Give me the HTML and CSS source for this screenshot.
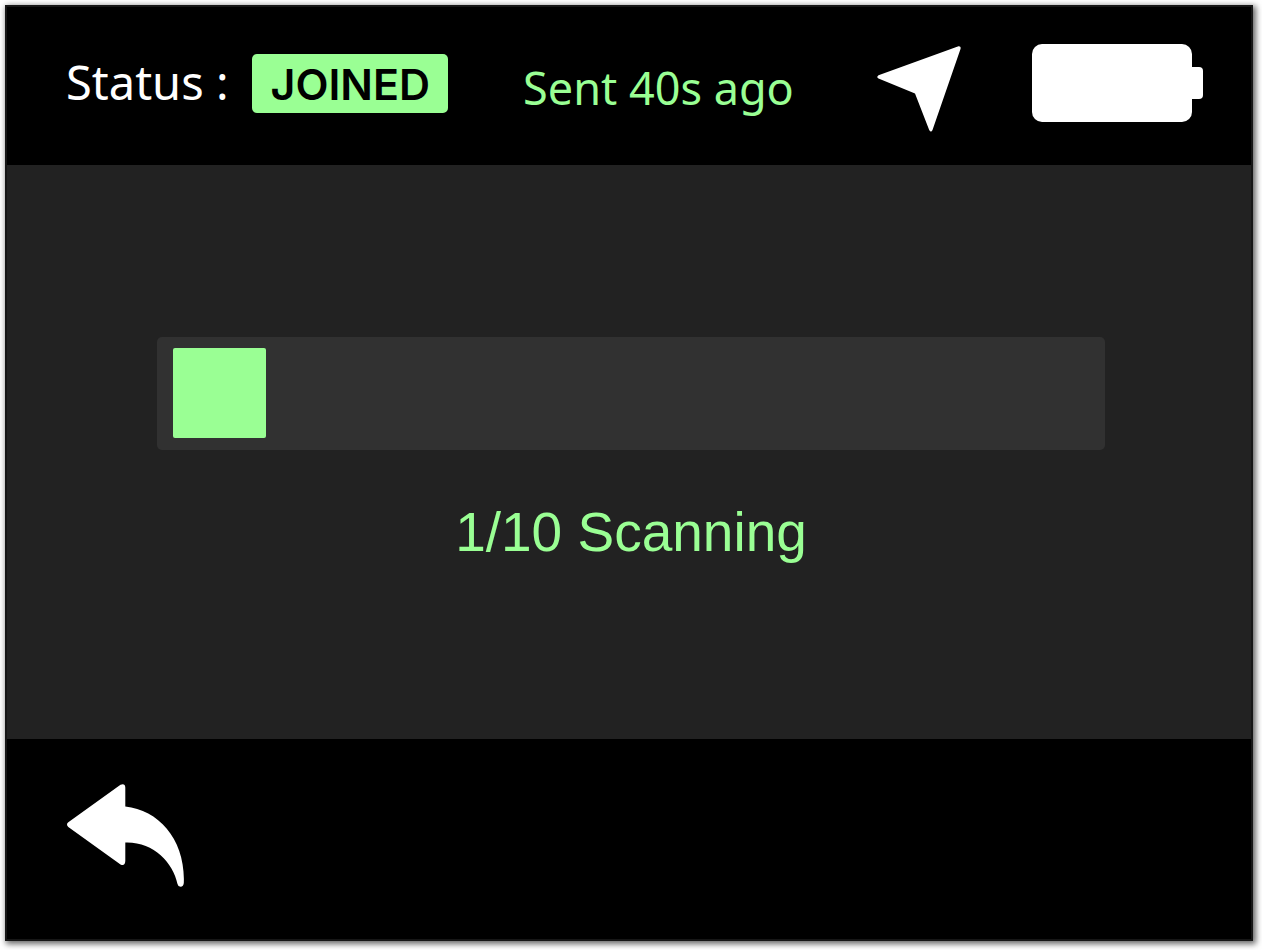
FILE: index.html
```html
<!DOCTYPE html>
<html lang="en">
<head>
<meta charset="utf-8">
<meta name="viewport" content="width=device-width, initial-scale=1">
<title>Scanning</title>
<link rel="stylesheet" href="styles.css">
</head>
<body>
<div class="screen">
  <header class="topbar">
    <span class="status-label">Status :</span>
    <span class="badge">JOINED</span>
    <span class="sent">Sent 40s ago</span>
    <div class="indicators">
      <svg class="location" viewBox="0 0 84 86" role="img" aria-label="Location">
        <path d="M1.500 29.200 81.500.3Q84.300 0 83.500 3L55.500 84Q54 87 52.200 84L38 47.500 1.500 32.500Q-1 31 1.500 29.200Z"/>
      </svg>
      <svg class="battery" viewBox="0 0 171 78" role="img" aria-label="Battery full">
        <rect width="160" height="78" rx="10"/>
        <path d="M158 23h9q4 0 4 4v24q0 4-4 4h-9z"/>
      </svg>
    </div>
  </header>
  <main class="content">
    <div class="progress" role="progressbar" aria-labelledby="progress-text" aria-valuemin="0" aria-valuemax="10" aria-valuenow="1">
      <div class="progress-fill" style="width: 10%"></div>
    </div>
    <p class="progress-text" id="progress-text">1/10 Scanning</p>
  </main>
  <footer class="bottombar">
    <button class="back" type="button" aria-label="Back">
      <svg class="back-icon" viewBox="0 0 118 103" aria-hidden="true">
        <path d="M1.300 38.300 53.500.8Q58-1 58.300 3.500V22.500C92 26 118.500 56 116.800 99Q116.500 102.700 113.500 102.700 111 102.700 110.500 100C106 78 86 57.500 58.300 58.500V77Q58 82.500 53.500 80.500L1.300 43Q-1.300 40.500 1.300 38.300Z"/>
      </svg>
    </button>
  </footer>
</div>
</body>
</html>
```
FILE: styles.css
```css
* {
  box-sizing: border-box;
}

body {
  margin: 0;
  padding: 5px 9px 9px 5px;
  background: #fff;
  font-family: "Noto Sans", sans-serif;
}

.screen {
  display: flex;
  flex-direction: column;
  min-height: calc(100vh - 14px);
  border: 2px solid #161616;
  background: #222;
  box-shadow: 2px 2px 6px 1px rgba(0, 0, 0, 0.6);
}

.topbar {
  display: flex;
  align-items: flex-start;
  min-height: 158px;
  padding: 37px 48px 32px 59px;
  background: #000;
  color: #fff;
  white-space: nowrap;
}

.status-label {
  padding-top: 12px;
  font-size: 47px;
  line-height: 52px;
}

.badge {
  margin: 10px 0 0 24px;
  padding: 1px 18px 0;
  border-radius: 5px;
  background: #9aff94;
  color: #000;
  font-family: Inter, sans-serif;
  font-size: 43px;
  font-weight: 600;
  line-height: 58px;
}

.sent {
  margin: 18px 0 0 75px;
  color: #9aff94;
  font-size: 45px;
  line-height: 52px;
}

.indicators {
  display: flex;
  gap: 71px;
  margin-left: auto;
}

.indicators svg,
.back-icon {
  display: block;
  fill: #fff;
}

.location {
  width: 84px;
  height: 86px;
  margin-top: 2px;
}

.battery {
  width: 171px;
  height: 78px;
}

.content {
  flex: 1;
  padding: 172px 146px 48px 150px;
}

.progress {
  height: 113px;
  padding: 11px 0 12px 16px;
  border-radius: 5px;
  background: #313131;
}

.progress-fill {
  height: 100%;
  border-radius: 2px;
  background: #9aff94;
}

.progress-text {
  margin: 48px 0 0;
  color: #9aff94;
  font-family: "Liberation Sans", Arial, sans-serif;
  font-size: 55px;
  line-height: 68px;
  text-align: center;
}

.bottombar {
  min-height: 200px;
  padding: 45px 60px;
  background: #000;
}

.back {
  display: block;
  padding: 0;
  border: 0;
  background: none;
  cursor: pointer;
}

.back-icon {
  width: 118px;
  height: 103px;
}
```
